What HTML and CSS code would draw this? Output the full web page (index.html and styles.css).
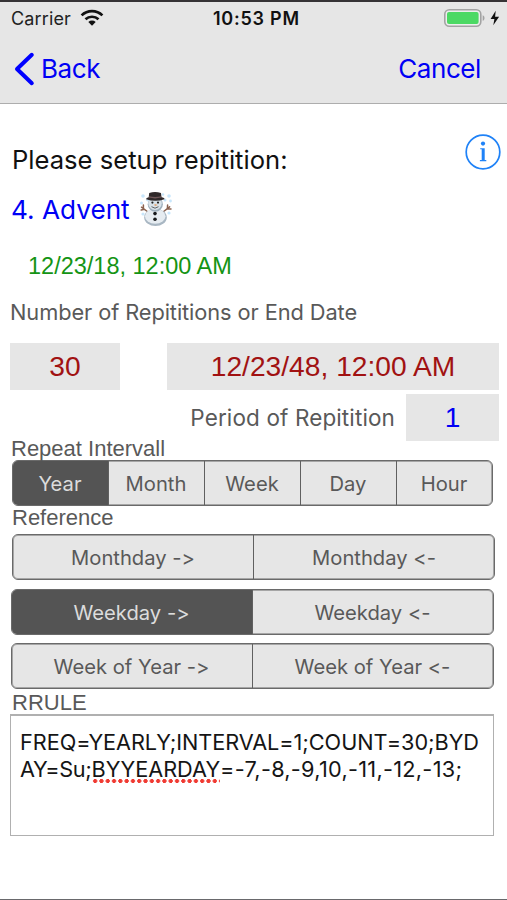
FILE: index.html
```html
<!DOCTYPE html>
<html lang="en">
<head>
<meta charset="utf-8">
<title>Repetition</title>
<link rel="stylesheet" href="styles.css">
</head>
<body>
<header class="header">
  <div class="status">
    <span class="carrier">Carrier</span>
    <svg class="wifi" width="24" height="18" viewBox="0 0 24 18"><g fill="none" stroke="#111" stroke-width="2.7"><path d="M1.6 6.4a15 15 0 0 1 20.8 0"/><path d="M5.5 10.3a9.5 9.5 0 0 1 13 0"/></g><path fill="#111" d="M12 16.8l-3.7-3.9a5.4 5.4 0 0 1 7.4 0z"/></svg>
    <span class="clock">10:53 PM</span>
    <svg class="battery" width="58" height="20" viewBox="0 0 58 20"><rect x="1.8" y="1.8" width="36" height="16.4" rx="4.5" fill="#eee" stroke="#a3a3a3" stroke-width="1.6"/><rect x="4" y="4" width="31.6" height="12" rx="2" fill="#4cd964"/><path d="M39.7 7.2c2.4.8 2.4 4.8 0 5.6z" fill="#a3a3a3"/><path d="M52.7 2.7L47.6 11h3.8l-1.1 6.3 5.8-8.5h-4z" fill="#111"/></svg>
  </div>
  <nav class="nav">
    <a class="back"><svg width="22" height="34" viewBox="0 0 22 34"><path d="M18.8 2.8L4 17l14.8 14.2" fill="none" stroke="#0000ff" stroke-width="4" stroke-linecap="round" stroke-linejoin="round"/></svg><span class="back-label">Back</span></a>
    <a class="cancel">Cancel</a>
  </nav>
</header>
<main class="form">
  <div class="title-row">
    <h1 class="title">Please setup repitition:</h1>
    <svg class="info" width="36" height="36" viewBox="0 0 36 36"><circle cx="18" cy="18" r="16.8" fill="none" stroke="#1f82f7" stroke-width="1.7"/><circle cx="18" cy="9.6" r="2.1" fill="#1f82f7"/><path d="M15.2 14.2h4.5v11.9h1.6v1.1h-6.4v-1.1h1.8V15.3h-1.5z" fill="#1f82f7"/></svg>
  </div>
  <div class="event">
    <span class="event-name">4. Advent</span>
    <svg class="snowman" width="34" height="36" viewBox="0 0 34 36">
      <g fill="#c8e6fb"><circle cx="4" cy="4" r="1.8"/><circle cx="8.5" cy="8" r="1.4"/><circle cx="2.5" cy="11" r="1.5"/><circle cx="30" cy="4" r="1.8"/><circle cx="26" cy="8" r="1.5"/><circle cx="31.5" cy="9" r="1.4"/><circle cx="4" cy="22" r="1.6"/><circle cx="30" cy="21" r="1.6"/><circle cx="24" cy="2.5" r="1.2"/></g>
      <path d="M9 20L2.5 15.2M5.2 17.2l-3 .8M4.4 16.6V13M24 20l6.6-5.2M28 16.8l4 .2M28.4 16.4l.2-3.4" fill="none" stroke="#8a6250" stroke-width="1.5" stroke-linecap="round"/>
      <ellipse cx="16.5" cy="25.4" rx="11.3" ry="8.6" fill="#a9b7c3"/><ellipse cx="16.2" cy="24.3" rx="10.3" ry="7.5" fill="#e6ecf1"/>
      <circle cx="16.3" cy="12.2" r="7.6" fill="#9fb0bd"/><circle cx="16" cy="11.3" r="6.7" fill="#d9e2e9"/>
      <path d="M10.2.9Q16-.9 22 .9l.5 4.4q3.2.4 3 2-9 3-18.4 0-.2-1.6 2.6-2z" fill="#30292a"/>
      <path d="M10 4.2q6 1.6 12.2 0v1.4q-6.1 1.6-12.2 0z" fill="#71585a"/>
      <circle cx="13.4" cy="10.6" r="1.1" fill="#222"/><circle cx="19" cy="10.6" r="1.1" fill="#222"/><path d="M15.5 12l3.4 1-3.2.9z" fill="#e59a5d"/><path d="M12.5 14.7q3.5 3 7 0" fill="none" stroke="#555" stroke-width=".9"/>
      <circle cx="16" cy="21.6" r="1.8" fill="#17191c"/><circle cx="16" cy="27.2" r="1.8" fill="#17191c"/>
    </svg>
  </div>
  <div class="start-date">12/23/18, 12:00 AM</div>
  <div class="count-label">Number of Repititions or End Date</div>
  <div class="end-row">
    <div class="field count">30</div>
    <div class="field end-date">12/23/48, 12:00 AM</div>
  </div>
  <div class="period-row">
    <span class="period-label">Period of Repitition</span>
    <div class="field period">1</div>
  </div>
  <div class="caption interval-caption">Repeat Intervall</div>
  <div class="segments intervals">
    <div class="seg selected"><span>Year</span></div>
    <div class="seg"><span>Month</span></div>
    <div class="seg"><span>Week</span></div>
    <div class="seg"><span>Day</span></div>
    <div class="seg"><span>Hour</span></div>
  </div>
  <div class="caption reference-caption">Reference</div>
  <div class="segments monthday">
    <div class="seg">Monthday -&gt;</div>
    <div class="seg">Monthday &lt;-</div>
  </div>
  <div class="segments weekday">
    <div class="seg selected">Weekday -&gt;</div>
    <div class="seg">Weekday &lt;-</div>
  </div>
  <div class="segments yearweek">
    <div class="seg">Week of Year -&gt;</div>
    <div class="seg">Week of Year &lt;-</div>
  </div>
  <div class="caption rule-caption">RRULE</div>
  <div class="rule">
    <div class="rule-first">FREQ=YEARLY;INTERVAL=1;COUNT=30;BYD</div>
    <div class="rule-second"><span class="rule-start">AY=Su;</span><span class="misspelled">BYYEARDAY</span><span class="rule-days">=-7,-8,-9,10,-11,-12,-13;</span></div>
  </div>
</main>
</body>
</html>
```

FILE: styles.css
```css
* { box-sizing: border-box; }
body {
  margin: 0;
  width: 507px;
  height: 900px;
  overflow: hidden;
  display: flex;
  flex-direction: column;
  background: #fff;
  color: #595959;
  font-family: Inter, "Liberation Sans", sans-serif;
  font-feature-settings: "calt" 0;
  white-space: nowrap;
  border-bottom: 1px solid #69696c;
}
svg { display: block; flex: none; overflow: visible; }
.header {
  height: 104px;
  flex: none;
  background: #e6e6e6;
  border-top: 2px solid #363336;
  border-bottom: 1px solid #adadad;
}
.status {
  height: 32px;
  display: grid;
  grid-template-columns: 70px 132px 230px 1fr;
  align-items: center;
  padding-left: 11px;
  color: #222;
}
.carrier { font-size: 18px; letter-spacing: 0.15px; }
.wifi { margin-left: -1px; }
.clock { font-size: 18px; font-weight: 600; letter-spacing: 0.75px; color: #111; }
.nav {
  height: 69px;
  display: flex;
  justify-content: space-between;
  align-items: center;
  padding: 0 26px 0 13px;
  color: #0000f5;
  font-size: 26px;
  letter-spacing: -0.4px;
}
.back { display: flex; align-items: center; gap: 6px; }
.form { flex: 1; padding: 0 0 0 10px; }
.title-row {
  display: flex;
  justify-content: space-between;
  height: 60px;
  padding: 30px 6px 0 2px;
}
.title {
  margin: 11px 0 0;
  line-height: 30px;
  font-size: 25.6px;
  font-weight: 400;
  color: #111;
}
.event {
  height: 62px;
  margin-top: 28px;
  display: flex;
  gap: 9px;
  padding-left: 1px;
  color: #0000f5;
  font-size: 26.2px;
  line-height: 36px;
}
.start-date {
  height: 46px;
  padding-left: 18px;
  line-height: 25px;
  font-family: "Liberation Sans", sans-serif;
  font-size: 23.5px;
  color: #149414;
}
.count-label {
  height: 43px;
  line-height: 24px;
  font-size: 21.8px;
  letter-spacing: -0.09px;
}
.end-row { display: flex; gap: 47px; height: 51px; }
.field {
  height: 47px;
  line-height: 47px;
  background: #e6e6e6;
  text-align: center;
  font-family: "Liberation Sans", sans-serif;
  font-size: 28.2px;
  color: #a11212;
}
.count { width: 110px; }
.end-date { width: 332px; }
.period-row {
  height: 47px;
  display: flex;
  justify-content: flex-end;
  align-items: center;
  gap: 11px;
  padding-right: 8px;
}
.period-label { font-size: 22.5px; letter-spacing: 0.12px; }
.period { width: 93px; color: #0000f5; }
.caption {
  font-family: "Liberation Sans", sans-serif;
  font-size: 22px;
  padding-left: 1px;
}
.interval-caption { height: 19px; line-height: 15px; }
.reference-caption { height: 28px; line-height: 24px; padding-left: 2px; }
.rule-caption { height: 25px; line-height: 27px; padding-left: 2px; }
.segments {
  display: flex;
  width: 483px;
  height: 46px;
  border: 1px solid #6a6a6a;
  border-radius: 6px;
  background: #e6e6e6;
  box-shadow: inset 0 0 0 1px #a6a6a6;
  overflow: hidden;
}
.seg {
  flex: 1;
  display: flex;
  align-items: center;
  justify-content: center;
  font-size: 20.2px;
  border-right: 1px solid #606060;
}
.seg:last-child { border-right: 0; }
.selected { background: #545454; color: #dcdcdc; }
.intervals { margin-left: 1.5px; width: 481px; }
.monthday { margin-left: 2px; margin-bottom: 9px; }
.weekday { margin-left: 0.5px; margin-bottom: 8px; }
.yearweek { margin-left: 0.5px; }
.rule {
  width: 484px;
  height: 122px;
  border: 1px solid #b0b0b0;
  border-top: 2px solid #b0b0b0;
  padding: 13px 0 0 9px;
  color: #151515;
  font-size: 21.7px;
  line-height: 27px;
}
.rule-first { letter-spacing: -0.05px; }
.rule-start { letter-spacing: -0.35px; }
.rule-days { letter-spacing: 0.28px; }
.misspelled {
  padding-bottom: 1px;
  background: radial-gradient(circle at 3.15px 2px, #f03a32 1.8px, transparent 2.2px) left bottom / 6.3px 4px repeat-x;
}
```
